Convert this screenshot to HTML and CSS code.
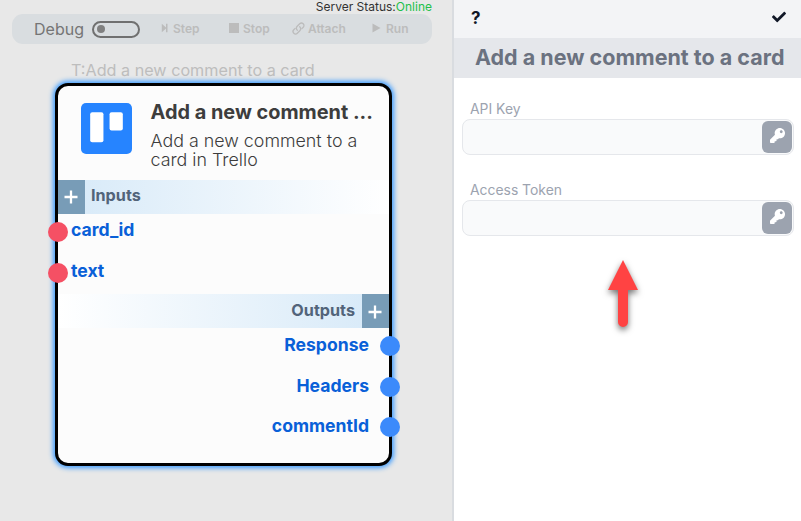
FILE: index.html
```html
<!DOCTYPE html>
<html lang="en">
<head>
<meta charset="utf-8">
<title>Flow designer</title>
<link rel="stylesheet" href="styles.css">
</head>
<body>
<svg width="0" height="0" class="defs">
  <symbol id="key" viewBox="0 0 512 512"><path d="M512 176.001C512 273.203 433.202 352 336 352c-11.22 0-22.19-1.062-32.827-3.069l-24.012 27.014A23.999 23.999 0 0 1 261.223 384H224v40c0 13.255-10.745 24-24 24h-40v40c0 13.255-10.745 24-24 24H24c-13.255 0-24-10.745-24-24v-78.059c0-6.365 2.529-12.47 7.029-16.971l161.802-161.802C163.108 213.814 160 195.271 160 176 160 78.798 238.797.001 335.999 0 433.488-.001 512 78.511 512 176.001zM336 128c0 26.51 21.49 48 48 48s48-21.49 48-48-21.49-48-48-48-48 21.49-48 48z"/></symbol>
  <symbol id="plus" viewBox="0 0 14 14"><path d="M7 .5v13M.5 7h13" stroke="currentColor" stroke-width="2.3"/></symbol>
</svg>
<div class="app">
  <main class="canvas">
    <div class="status"><span>Server Status:</span><span class="online">Online</span></div>
    <div class="toolbar">
      <span class="debug">Debug</span>
      <span class="toggle"></span>
      <span class="tool step"><svg width="8" height="10" viewBox="0 0 8 10"><path d="M.8 .8v8.400L5 5.600V9.200h1.500V.8H5v3.600z"/></svg>Step</span>
      <span class="tool stop"><svg width="10" height="10" viewBox="0 0 10 10"><path d="M0 0h10v10H0z"/></svg>Stop</span>
      <span class="tool attach"><svg width="13" height="13" viewBox="0 0 13 13"><g fill="none" stroke="currentColor" stroke-width="1.300" stroke-linecap="round"><path d="M5.300 8.200C4 6.900 4.100 5.400 5.200 4.300L7.700 1.800c1-1 2.500-1 3.500 0s1 2.500 0 3.500L9.900 6.600"/><path d="M7.700 4.800c1.300 1.300 1.200 2.800.1 3.900l-2.500 2.500c-1 1-2.500 1-3.500 0s-1-2.500 0-3.500l1.300-1.300"/></g></svg>Attach</span>
      <span class="tool run"><svg width="9" height="10" viewBox="0 0 9 10"><path d="M.5.500v9L8.500 5z"/></svg>Run</span>
    </div>
    <div class="caption">T:Add a new comment to a card</div>
    <section class="node">
      <header class="head">
        <svg class="logo" width="51" height="51" viewBox="0 0 50 50"><rect width="50" height="50" rx="5" fill="#2684ff"/><rect x="9" y="9" width="13" height="29.500" rx="2" fill="#fff"/><rect x="28" y="9" width="13" height="18" rx="2" fill="#fff"/></svg>
        <div class="headtext">
          <h1>Add a new comment ...</h1>
          <p>Add a new comment to a<br>card in Trello</p>
        </div>
      </header>
      <div class="bar in"><span class="add"><svg width="14" height="14"><use href="#plus"/></svg></span><b>Inputs</b></div>
      <ul class="inputs">
        <li><i class="port"></i><span>card_id</span></li>
        <li><i class="port"></i><span>text</span></li>
      </ul>
      <div class="bar out"><b>Outputs</b><span class="add"><svg width="14" height="14"><use href="#plus"/></svg></span></div>
      <ul class="outputs">
        <li><span>Response</span><i class="port"></i></li>
        <li><span>Headers</span><i class="port"></i></li>
        <li><span>commentId</span><i class="port"></i></li>
      </ul>
    </section>
  </main>
  <aside class="panel">
    <div class="actions">
      <b>?</b>
      <svg width="14" height="14" viewBox="0 0 512 512"><path d="M173.898 439.404l-166.400-166.400c-9.997-9.997-9.997-26.206 0-36.204l36.203-36.204c9.997-9.998 26.207-9.998 36.204 0L192 312.690 432.095 72.596c9.997-9.997 26.207-9.997 36.204 0l36.203 36.204c9.997 9.997 9.997 26.206 0 36.204l-294.400 294.401c-9.998 9.997-26.207 9.997-36.204-.001z"/></svg>
    </div>
    <h2><span>Add a new comment to a card</span></h2>
    <div class="form">
      <label class="field"><span>API Key</span><div class="input"><em><svg width="15" height="15"><use href="#key"/></svg></em></div></label>
      <label class="field"><span>Access Token</span><div class="input"><em><svg width="15" height="15"><use href="#key"/></svg></em></div></label>
    </div>
    <svg class="arrow" width="50" height="86" viewBox="0 0 50 86"><path d="M25 10l15 30H30v32a5 5 0 0 1-10 0V40H10z" fill="#ff4343"/></svg>
  </aside>
</div>
</body>
</html>
```

FILE: styles.css
```css
* { box-sizing: border-box; }
body { margin: 0; font-family: Inter, "Liberation Sans", sans-serif; }
h1, h2, p, ul { margin: 0; padding: 0; font-weight: inherit; }
ul { list-style: none; }
svg { display: block; fill: currentColor; flex: none; }
.defs { position: absolute; }
.app { display: flex; width: 801px; height: 521px; overflow: hidden; }
.canvas { width: 452px; background: #e8e8e8; flex: none; }
.status { height: 14px; line-height: 13px; padding-right: 20px; font-size: 12px; text-align: right; color: #333; white-space: nowrap; }
.online { color: #22c04a; }
.toolbar { display: flex; align-items: center; width: 420px; height: 30px; margin-left: 12px; padding-left: 22px; border-radius: 11px; background: #d9dde0; color: #bcbcbc; white-space: nowrap; }
.debug { width: 58px; font-size: 16px; line-height: 20px; margin-top: -1px; color: #757575; }
.toggle { width: 48px; height: 17px; border: 2px solid #707070; border-radius: 9px; }
.toggle::before { content: ""; display: block; width: 8px; height: 8px; margin: 2px 0 0 3px; border-radius: 50%; background: #808080; }
.tool { display: flex; align-items: center; margin-top: -2px; font-size: 12px; font-weight: 600; }
.step { width: 68px; margin-left: 21px; gap: 4px; }
.stop { width: 63px; gap: 4px; }
.attach { width: 80px; gap: 3px; }
.run { gap: 5px; }
.caption { height: 39px; padding: 16px 0 0 71px; font-size: 16.200px; line-height: 20px; color: #bdbdbd; white-space: nowrap; }
.node { width: 337px; height: 383px; margin-left: 55px; border: 3px solid #000; border-radius: 13px; background: #fcfcfc; box-shadow: 0 0 5px 2px #3b9bff; }
.head { display: flex; height: 94px; padding: 17px 0 0 23px; gap: 18.500px; color: #3d3d3d; white-space: nowrap; }
.headtext { width: 240px; }
.head h1 { font-size: 19.900px; font-weight: 700; line-height: 22px; margin-top: -2px; }
.head p { margin-top: 8px; font-size: 17.850px; line-height: 19px; font-weight: 300; }
.bar { display: flex; height: 34px; color: #52647a; font-size: 16.200px; line-height: 32px; }
.bar b { font-weight: 700; margin-top: -1px; }
.in { background: linear-gradient(90deg, #d6e9f8, #fff); gap: 6px; }
.out { background: linear-gradient(270deg, #d6e9f8, #fff); justify-content: flex-end; gap: 7px; }
.out b { margin-top: 0; }
.add { display: flex; align-items: center; width: 27px; padding-left: 6px; background: #789cb7; color: #fff; }
.out .add svg { position: relative; top: 1px; }
.inputs, .outputs { color: #0960d8; font-size: 17.600px; font-weight: 700; }
.inputs li, .outputs li { display: flex; height: 40.500px; align-items: center; }
.inputs li { margin-left: -10px; gap: 3px; }
.outputs li { justify-content: flex-end; margin-right: -11px; gap: 11px; }
.inputs span, .outputs span { position: relative; top: -2px; }
.inputs li:first-child span { top: -3px; }
.port { width: 20px; height: 20px; border-radius: 50%; background: #f55064; flex: none; }
.outputs .port { background: #3b8afb; }
.inputs { display: flow-root; height: 80px; }
.inputs li:first-child { margin-top: -2px; }
.outputs { display: flow-root; }
.outputs li:first-child { margin-top: -2px; }
.outputs li:nth-child(2) span { top: -1px; }
.panel { width: 349px; border-left: 2px solid #d9dce0; background: #fff; }
.actions { display: flex; justify-content: space-between; height: 38px; padding: 10px 15px 0 17px; background: #f3f4f6; color: #111827; font-size: 17px; line-height: 16px; }
.panel h2 { height: 40px; padding-left: 21px; background: #e5e7eb; color: #6b7280; font-size: 21.500px; font-weight: 700; line-height: 39px; white-space: nowrap; }
.form { padding: 22px 7px 0 8px; }
.field { display: block; height: 81px; color: #9ca3af; font-size: 13.900px; line-height: 19px; }
.field span { display: block; width: fit-content; height: 19px; margin-left: 8px; }
.input { display: flex; justify-content: flex-end; height: 36px; padding: 1px; border: 1px solid #e5e7eb; border-radius: 8px; background: #f9fafb; }
.input em { display: flex; justify-content: center; width: 30px; height: 32px; padding-top: 7px; border-radius: 6px; background: #9ca3af; color: #fff; }
.arrow { margin: -12px 0 0 144px; filter: drop-shadow(0 3px 3px rgba(0, 0, 0, .55)); }
```
